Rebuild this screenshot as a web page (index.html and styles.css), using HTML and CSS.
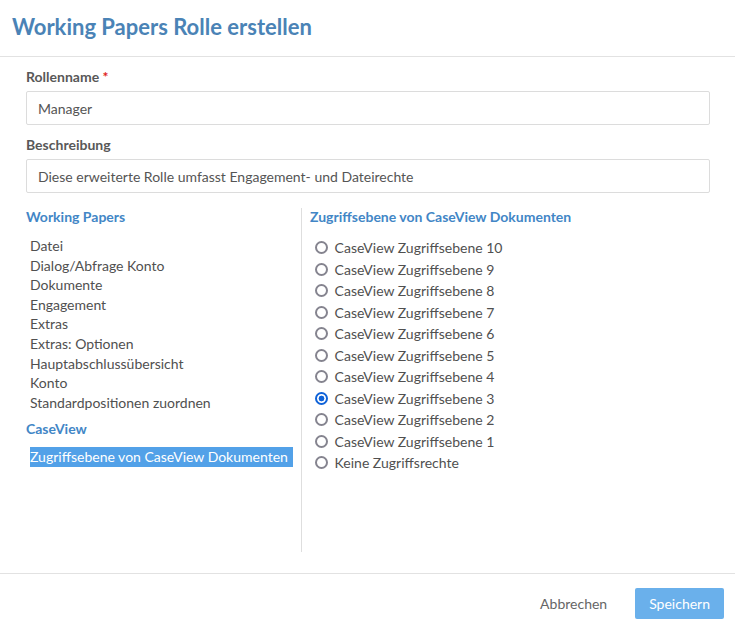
FILE: index.html
```html
<!DOCTYPE html>
<html lang="de">
<head>
<meta charset="utf-8">
<title>Working Papers Rolle erstellen</title>
<link rel="stylesheet" href="styles.css">
</head>
<body>
<div class="dialog">
  <header class="dlg-header">
    <h1 class="dlg-title">Working Papers Rolle erstellen</h1>
  </header>
  <main class="dlg-body">
    <div class="field">
      <label class="field-label">Rollenname <span class="req">*</span></label>
      <div class="input">Manager</div>
    </div>
    <div class="field">
      <label class="field-label">Beschreibung</label>
      <div class="input">Diese erweiterte Rolle umfasst Engagement- und Dateirechte</div>
    </div>
    <div class="columns">
      <nav class="col-left">
        <h2 class="group-title">Working Papers</h2>
        <ul class="item-list">
          <li>Datei</li>
          <li>Dialog/Abfrage Konto</li>
          <li>Dokumente</li>
          <li>Engagement</li>
          <li>Extras</li>
          <li>Extras: Optionen</li>
          <li>Hauptabschlussübersicht</li>
          <li>Konto</li>
          <li>Standardpositionen zuordnen</li>
        </ul>
        <h2 class="group-title group-second">CaseView</h2>
        <ul class="item-list item-list-second">
          <li class="selected">Zugriffsebene von CaseView Dokumenten</li>
        </ul>
      </nav>
      <section class="col-right">
        <h2 class="group-title">Zugriffsebene von CaseView Dokumenten</h2>
        <div class="radio-list">
          <label class="radio-row"><input type="radio" name="lvl"> CaseView Zugriffsebene 10</label>
          <label class="radio-row"><input type="radio" name="lvl"> CaseView Zugriffsebene 9</label>
          <label class="radio-row"><input type="radio" name="lvl"> CaseView Zugriffsebene 8</label>
          <label class="radio-row"><input type="radio" name="lvl"> CaseView Zugriffsebene 7</label>
          <label class="radio-row"><input type="radio" name="lvl"> CaseView Zugriffsebene 6</label>
          <label class="radio-row"><input type="radio" name="lvl"> CaseView Zugriffsebene 5</label>
          <label class="radio-row"><input type="radio" name="lvl"> CaseView Zugriffsebene 4</label>
          <label class="radio-row"><input type="radio" name="lvl" checked> CaseView Zugriffsebene 3</label>
          <label class="radio-row"><input type="radio" name="lvl"> CaseView Zugriffsebene 2</label>
          <label class="radio-row"><input type="radio" name="lvl"> CaseView Zugriffsebene 1</label>
          <label class="radio-row"><input type="radio" name="lvl"> Keine Zugriffsrechte</label>
        </div>
      </section>
    </div>
  </main>
  <footer class="dlg-footer">
    <button class="btn btn-link" type="button">Abbrechen</button>
    <button class="btn btn-primary" type="button">Speichern</button>
  </footer>
</div>
</body>
</html>
```

FILE: styles.css
```css
* { box-sizing: border-box; }

html, body {
  margin: 0;
  padding: 0;
  background: #fff;
}

body {
  font-family: Lato, "Open Sans", Arial, sans-serif;
  font-size: 14px;
  color: #555;
}

.dlg-header {
  height: 57px;
  border-bottom: 1px solid #e2e2e2;
  padding: 0 12px;
  display: flex;
  align-items: center;
}

.dlg-title {
  margin: 0 0 2px 0;
  font-size: 22px;
  font-weight: 700;
  color: #4a83b6;
  line-height: 1;
}

.dlg-body {
  padding: 10px 25px 0 26px;
}

.field {
  margin-bottom: 10px;
}

.field-label {
  display: block;
  font-weight: 700;
  font-size: 14px;
  line-height: 20px;
  color: #585858;
  margin-bottom: 4px;
}

.req {
  color: #e02020;
}

.input {
  height: 34px;
  border: 1px solid #dcdcdc;
  border-radius: 2px;
  padding: 0 11px;
  display: flex;
  align-items: center;
  font-size: 14px;
  color: #555;
}

.columns {
  margin-top: 15px;
  display: grid;
  grid-template-columns: 275px 1fr;
  height: 344px;
}

.col-left {
  padding-right: 8px;
}

.col-right {
  border-left: 1px solid #dedede;
  padding-left: 8px;
}

.group-title {
  margin: -1px 0 0 0;
  font-size: 14px;
  font-weight: 700;
  line-height: 20px;
  color: #4286c6;
}

.item-list {
  list-style: none;
  margin: 9px 0 0 4px;
  padding: 0;
  line-height: 19.6px;
  color: #505050;
}

.group-second {
  margin-top: 7px;
}

.item-list-second {
  margin-top: 8px;
}

.item-list li.selected {
  background: #52a1e8;
  color: #fff;
  line-height: 20px;
}

.radio-list {
  margin-top: 10px;
  display: flex;
  flex-direction: column;
}

.radio-row {
  height: 21.5px;
  display: flex;
  align-items: center;
  color: #505050;
  white-space: pre;
}

.radio-row input {
  appearance: none;
  -webkit-appearance: none;
  margin: 0 3px 0 5px;
  width: 13px;
  height: 13px;
  border: 2px solid #85848f;
  border-radius: 50%;
  background: #fff;
}

.radio-row input:checked {
  border-color: #0f62d8;
  background: radial-gradient(circle, #0f62d8 0 2.6px, #fff 3.2px);
}

.dlg-footer {
  margin-top: 21px;
  border-top: 1px solid #e2e2e2;
  padding: 14px 11px 0 0;
  display: flex;
  justify-content: flex-end;
  align-items: center;
  gap: 16px;
}

.btn {
  font-family: inherit;
  font-size: 14px;
  border: none;
  border-radius: 2px;
  height: 31px;
  padding: 0 14px;
  cursor: pointer;
}

.btn-link {
  background: transparent;
  color: #666;
  padding: 0 12px;
}

.btn-primary {
  background: #6ab0eb;
  color: #fff;
}
```
